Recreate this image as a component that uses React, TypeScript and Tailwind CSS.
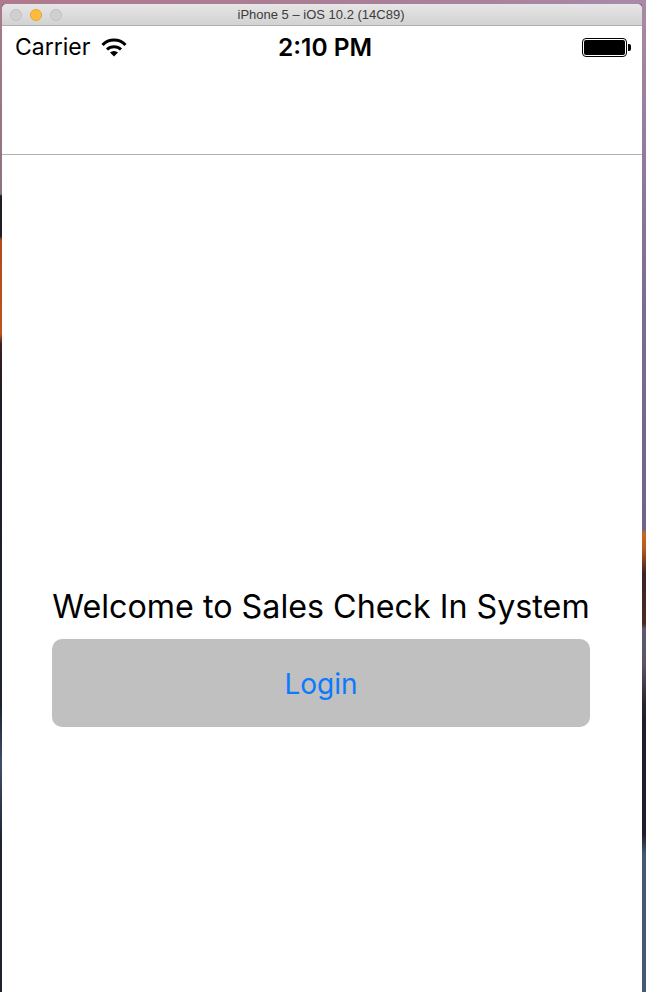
export default function App() {
  return (
    <div className="flex flex-col w-[646px] h-[992px] overflow-hidden bg-[#8a6f8c] font-['Inter','Liberation_Sans',sans-serif]">
      <div className="h-[4px] shrink-0 bg-[linear-gradient(90deg,#b07a8e_0%,#a97f98_60%,#a88aa8_100%)]" />
      <div className="flex flex-1 min-h-0">
        <div className="w-[2px] shrink-0 bg-[linear-gradient(180deg,#a87a8c_0px,#8d7382_190px,#1f1c24_192px,#1f1c24_232px,#b5491a_236px,#c0521c_330px,#3a2026_340px,#2a1c22_370px,#1d1c26_400px,#1c2230_600px,#1e2230_700px,#3f4f68_760px,#1e2230_840px,#1e2230_988px)]" />
        <div className="flex-1 flex flex-col min-w-0 bg-white rounded-t-[5px] overflow-hidden">
          <div className="relative h-[22px] shrink-0 flex items-center justify-center pr-[2px] bg-[linear-gradient(180deg,#e6e6e6,#d2d2d2)] border-b border-[#b1b1b1]">
            <div className="absolute left-[8px] top-[5px] flex gap-[8px]">
              <span className="w-[12px] h-[12px] rounded-full bg-[#d0d0d0] border border-[#bfbfbf]" />
              <span className="w-[12px] h-[12px] rounded-full bg-[#fdbc40] border border-[#e5a531]" />
              <span className="w-[12px] h-[12px] rounded-full bg-[#d0d0d0] border border-[#bfbfbf]" />
            </div>
            <span className="text-[13px] leading-none text-[#3c3c3c] font-['Liberation_Sans',sans-serif]">iPhone 5 – iOS 10.2 (14C89)</span>
          </div>
          <div className="h-[129px] shrink-0 border-b border-[#b2b2b2]">
            <div className="relative flex items-center justify-between h-[42px] pl-[13px] pr-[11px]">
              <div className="flex items-center gap-[11px]">
                <span className="text-[23px] leading-none text-black">Carrier</span>
                <svg width="26" height="19" viewBox="0 0 26 19" fill="none" className="block">
                  <path d="M1.5 7 A16 16 0 0 1 24.5 7" stroke="#000" strokeWidth="3" />
                  <path d="M6 11.5 A10 10 0 0 1 20 11.5" stroke="#000" strokeWidth="3" />
                  <path d="M9 14.5 A6 6 0 0 1 17 14.5 L13 18.5 Z" fill="#000" />
                </svg>
              </div>
              <span className="absolute left-[276px] top-[8px] text-[24.5px] leading-[26px] font-semibold text-black">2:10 PM</span>
              <div className="flex items-center">
                <div className="w-[45px] h-[19px] rounded-[4px] border border-black p-[1px] bg-white">
                  <div className="w-full h-full rounded-[2px] bg-black" />
                </div>
                <div className="w-[3px] h-[7px] rounded-r-[2px] bg-black ml-[1px]" />
              </div>
            </div>
          </div>
          <div className="flex-1 flex flex-col items-center pt-[432px] pr-[2px]">
            <p className="text-[32.25px] leading-[40px] text-black whitespace-nowrap">Welcome to Sales Check In System</p>
            <button className="mt-[12px] w-[538px] h-[88px] pt-[1px] rounded-[10px] bg-[#c0c0c0] text-[28px] text-[#0a7aff]">Login</button>
          </div>
        </div>
        <div className="w-[4px] shrink-0 bg-[linear-gradient(180deg,#a98aa5_0px,#7d6c92_300px,#6f6488_525px,#c8691f_530px,#b55a20_545px,#3a2426_570px,#4a2c24_620px,#5f5a70_625px,#5c5468_660px,#2a2430_700px,#1e1e2e_720px,#1e1e2e_830px,#435a74_850px,#435a74_988px)]" />
      </div>
    </div>
  );
}
